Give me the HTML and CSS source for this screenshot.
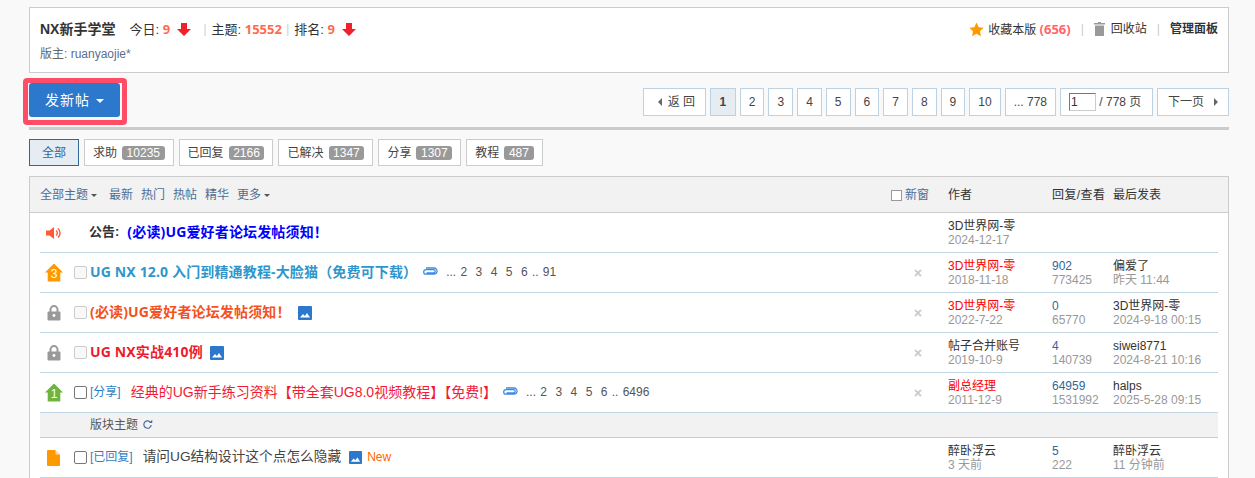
FILE: index.html
```html
<!DOCTYPE html>
<html lang="zh-CN">
<head>
<meta charset="utf-8">
<title>NX新手学堂</title>
<link rel="stylesheet" href="styles.css">
</head>
<body>
<svg class="defs" width="0" height="0" aria-hidden="true">
  <symbol id="i-pic" viewBox="0 0 14 14"><rect width="14" height="14" rx="1" fill="#2b78cd"/><path d="M2 11.500 5 8l1.800 2L9 7l3 4.500z" fill="#fff"/></symbol>
  <symbol id="i-clip" viewBox="0 0 16 9"><path d="M4.500 6h7a1.600 1.600 0 0 0 0-3.400H4a2.200 2.200 0 0 0 0 4.600h8a3 3 0 0 0 0-6.200H4" fill="none" stroke="#3f8ae0" stroke-width="1.300"/></symbol>
  <symbol id="i-lock" viewBox="0 0 14 16"><path d="M3.500 7V4.600a3.500 3.500 0 0 1 7 0V7" fill="none" stroke="#999" stroke-width="2"/><rect x="0.500" y="6.500" width="13" height="9" rx="1.200" fill="#999"/><circle cx="7" cy="10.500" r="1.400" fill="#fff"/></symbol>
  <symbol id="i-x" viewBox="0 0 8 8"><path d="M1 1l6 6M7 1 1 7" stroke="#ccc" stroke-width="1.800"/></symbol>
  <symbol id="i-down" viewBox="0 0 14 13"><path d="M4 0h6v6h4L7 13 0 6h4z" fill="#f0212b"/></symbol>
</svg>
<div class="page">
  <section class="forum-head">
    <div class="fh-left">
      <div class="fh-line">
        <strong class="fh-name">NX新手学堂</strong>
        <span>今日: <b class="num">9</b></span>
        <svg class="down"><use href="#i-down"/></svg>
        <span class="sep">|</span>
        <span>主题: <b class="num">15552</b></span>
        <span class="sep sep-tight">|</span>
        <span>排名: <b class="num">9</b></span>
        <svg class="down"><use href="#i-down"/></svg>
      </div>
      <div class="fh-mod">版主: <a class="link">ruanyaojie*</a></div>
    </div>
    <div class="fh-right">
      <svg class="star" viewBox="0 0 16 16"><path d="M8 .6l2.300 4.900 5.300.7-3.900 3.700 1 5.300L8 12.600l-4.700 2.600 1-5.300L.4 6.200l5.300-.7z" fill="#f90"/></svg>
      <span>收藏本版 <b class="num-fav">(656)</b></span>
      <span class="sep">|</span>
      <svg class="trash" viewBox="0 0 11 14"><path d="M4 0h3v1h4v1.400H0V1h4zM1 3.400h9V14H1z" fill="#999"/></svg>
      <span>回收站</span>
      <span class="sep">|</span>
      <strong class="admin">管理面板</strong>
    </div>
  </section>

  <div class="toolbar">
    <button class="post-btn">发新帖<i class="caret caret-w"></i></button>
    <nav class="pager">
      <a class="pg pg-back"><i class="tri-l"></i>返 回</a>
      <a class="pg cur">1</a><a class="pg">2</a><a class="pg">3</a><a class="pg">4</a><a class="pg">5</a><a class="pg">6</a><a class="pg">7</a><a class="pg">8</a><a class="pg">9</a><a class="pg">10</a><a class="pg">... 778</a>
      <span class="pg pg-jump"><input class="pg-input" value="1" aria-label="页码"> / 778 页</span>
      <a class="pg pg-next">下一页<i class="tri-r"></i></a>
    </nav>
  </div>

  <div class="tabs">
    <a class="tab active">全部</a>
    <a class="tab">求助 <span class="badge">10235</span></a>
    <a class="tab">已回复 <span class="badge">2166</span></a>
    <a class="tab">已解决 <span class="badge">1347</span></a>
    <a class="tab">分享 <span class="badge">1307</span></a>
    <a class="tab">教程 <span class="badge">487</span></a>
  </div>

  <section class="list">
    <header class="list-head">
      <div class="lh-filters">
        <a>全部主题<i class="caret caret-b"></i></a><a class="f1">最新</a><a>热门</a><a>热帖</a><a>精华</a><a>更多<i class="caret caret-b"></i></a>
      </div>
      <label class="lh-new"><i class="mini-box"></i>新窗</label>
      <span class="c-author">作者</span>
      <span class="c-count wide">回复/查看</span>
      <span class="c-last">最后发表</span>
    </header>
    <div class="rows">
      <div class="row">
        <span class="c-icon"><svg class="horn" viewBox="0 0 16 14"><path d="M0 4.500h3.500L8 1v12L3.500 9.500H0z" fill="#ff5a36"/><path d="M10 4.500a3 3 0 0 1 0 5M12 2.500a6 6 0 0 1 0 9" fill="none" stroke="#ff5a36" stroke-width="1.400"/></svg></span>
        <span class="c-check"></span>
        <div class="c-title"><b class="notice-label">公告:</b> <a class="t t-notice">(必读)UG爱好者论坛发帖须知！</a></div>
        <span class="c-x"></span>
        <div class="c-author cell"><a>3D世界网-零</a><em>2024-12-17</em></div>
        <div class="c-count cell"></div>
        <div class="c-last cell"></div>
      </div>
      <div class="row">
        <span class="c-icon"><span class="up up-o">3</span></span>
        <span class="c-check"><i class="box soft"></i></span>
        <div class="c-title"><a class="t t-blue">UG NX 12.0 入门到精通教程-大脸猫（免费可下载）</a><svg class="clip"><use href="#i-clip"/></svg><span class="tpages">... 2 &nbsp;3 &nbsp;4 &nbsp;5 &nbsp;6 .. 91</span></div>
        <span class="c-x"><svg class="x"><use href="#i-x"/></svg></span>
        <div class="c-author cell"><a class="red">3D世界网-零</a><em>2018-11-18</em></div>
        <div class="c-count cell"><a class="reply">902</a><em>773425</em></div>
        <div class="c-last cell"><a>偏爱了</a><em>昨天 11:44</em></div>
      </div>
      <div class="row">
        <span class="c-icon"><svg class="lock"><use href="#i-lock"/></svg></span>
        <span class="c-check"><i class="box soft"></i></span>
        <div class="c-title"><a class="t t-orange">(必读)UG爱好者论坛发帖须知！</a><svg class="pic"><use href="#i-pic"/></svg></div>
        <span class="c-x"><svg class="x"><use href="#i-x"/></svg></span>
        <div class="c-author cell"><a class="red">3D世界网-零</a><em>2022-7-22</em></div>
        <div class="c-count cell"><a class="reply">0</a><em>65770</em></div>
        <div class="c-last cell"><a>3D世界网-零</a><em>2024-9-18 00:15</em></div>
      </div>
      <div class="row">
        <span class="c-icon"><svg class="lock"><use href="#i-lock"/></svg></span>
        <span class="c-check"><i class="box soft"></i></span>
        <div class="c-title"><a class="t t-red">UG NX实战410例</a><svg class="pic"><use href="#i-pic"/></svg></div>
        <span class="c-x"><svg class="x"><use href="#i-x"/></svg></span>
        <div class="c-author cell"><a>帖子合并账号</a><em>2019-10-9</em></div>
        <div class="c-count cell"><a class="reply">4</a><em>140739</em></div>
        <div class="c-last cell"><a>siwei8771</a><em>2024-8-21 10:16</em></div>
      </div>
      <div class="row">
        <span class="c-icon"><span class="up up-g">1</span></span>
        <span class="c-check"><i class="box"></i></span>
        <div class="c-title"><a class="type">[分享]</a><a class="t-plain red">经典的UG新手练习资料【带全套UG8.0视频教程】【免费!】</a><svg class="clip"><use href="#i-clip"/></svg><span class="tpages">... 2 &nbsp;3 &nbsp;4 &nbsp;5 &nbsp;6 .. 6496</span></div>
        <span class="c-x"><svg class="x"><use href="#i-x"/></svg></span>
        <div class="c-author cell"><a class="red">副总经理</a><em>2011-12-9</em></div>
        <div class="c-count cell"><a class="reply">64959</a><em>1531992</em></div>
        <div class="c-last cell"><a>halps</a><em>2025-5-28 09:15</em></div>
      </div>
      <div class="row-sub">版块主题 <svg class="refresh" viewBox="0 0 12 12"><path d="M10 6.500A4 4 0 1 1 8.600 3" fill="none" stroke="#4a6a94" stroke-width="1.300"/><path d="M7.500 4.400h3.700V.7z" fill="#4a6a94"/></svg></div>
      <div class="row">
        <span class="c-icon"><svg class="file" viewBox="0 0 13 16"><path d="M1 0h7l5 5v10a1 1 0 0 1-1 1H1a1 1 0 0 1-1-1V1a1 1 0 0 1 1-1z" fill="#f90"/><path d="M8.500 0 13 4.500H8.500z" fill="#ffd9a0"/></svg></span>
        <span class="c-check"><i class="box"></i></span>
        <div class="c-title"><a class="type">[已回复]</a><a class="t-plain t-reply">请问UG结构设计这个点怎么隐藏</a><svg class="pic pic-new"><use href="#i-pic"/></svg><span class="new">New</span></div>
        <span class="c-x"></span>
        <div class="c-author cell"><a>醉卧浮云</a><em>3 天前</em></div>
        <div class="c-count cell"><a class="reply">5</a><em>222</em></div>
        <div class="c-last cell"><a>醉卧浮云</a><em>11 分钟前</em></div>
      </div>
    </div>
  </section>
</div>
</body>
</html>
```
FILE: styles.css
```css
* { box-sizing: border-box; }
html, body { height: 478px; overflow: hidden; }
body {
  margin: 0;
  background: #f9f9f9;
  color: #333;
  font: 12px/16px "Liberation Sans", "Noto Sans CJK SC", sans-serif;
}
.defs { position: absolute; }
a { color: inherit; text-decoration: none; }
em { font-style: normal; }
.page { width: 1200px; margin: 7px 0 0 29px; }

/* forum header */
.forum-head {
  height: 66px;
  background: #fff;
  border: 1px solid #ccc;
  padding: 11px 10px 0;
  display: flex;
  justify-content: space-between;
}
.fh-line { display: flex; align-items: center; height: 20px; font-size: 13px; }
.fh-name { font-size: 14px; margin-right: 14px; color: #333; }
.num { color: #ff6b4d; font: 700 13px/16px "Noto Sans", sans-serif; }
.down { width: 14px; height: 13px; margin: 0 0 0 7px; }
.sep { color: #c9d6e3; margin: 0 5px 0 12px; }
.sep-tight { margin: 0 5px 0 4px; }
.fh-mod { margin-top: 7px; color: #666; }
.link { color: #5a6f8f; }
.fh-right { display: flex; align-items: center; height: 18px; margin-top: 1px; }
.star { width: 15px; height: 15px; margin-right: 4px; }
.num-fav { color: #f66; font: 700 13px/16px "Noto Sans", sans-serif; }
.trash { width: 11px; height: 14px; margin: 0 6px 0 0; }
.admin { color: #333; font-weight: 600; }
.fh-right .sep { margin: 0 10px; color: #ccc; }

/* toolbar */
.toolbar {
  display: flex;
  justify-content: space-between;
  height: 57px;
  padding-top: 10px;
  border-bottom: 3px solid #ccc;
  margin-bottom: 9px;
}
.post-btn {
  position: relative;
  width: 91px;
  height: 34px;
  border: 0;
  border-radius: 3px;
  background: #2b78cd;
  color: #fff;
  font: 14px/34px "Liberation Sans", "Noto Sans CJK SC", sans-serif;
  letter-spacing: 1px;
  padding: 0;
}
.post-btn::after {
  content: "";
  position: absolute;
  left: -6px; top: -5px; right: -7px; bottom: -8px;
  border: 5px solid #ff4d68;
  border-radius: 4px;
}
.caret { display: inline-block; width: 0; height: 0; border: 4px solid transparent; border-bottom: 0; vertical-align: middle; margin-left: 4px; }
.caret-w { border-top-color: #fff; margin-left: 6px; }
.caret-b { border-width: 3px; border-bottom: 0; border-top-color: #555; margin-left: 3px; }

.pager { display: flex; gap: 4px; height: 28px; margin-top: 5px; }
.pg {
  display: flex; align-items: center; justify-content: center;
  height: 28px;
  padding: 0 8px;
  background: #fff;
  border: 1px solid #bcd2e2;
  color: #444;
}
.pg.cur { background: #e5ecf2; font-weight: 700; width: 26px; padding: 0; }
.pg-back { width: 63px; padding: 0 0 0 14px; justify-content: flex-start; }
.pg-jump { width: 93px; padding: 0 0 0 8px; justify-content: flex-start; white-space: pre; }
.pg-input {
  width: 27px; height: 18px; margin: 0; padding: 0 1px;
  border: 1px solid #ccc; border-top-color: #777; border-left-color: #777;
  font: 12px "Liberation Sans", sans-serif; color: #333; background: #fff;
}
.pg-next { width: 72px; padding: 0 0 0 10px; justify-content: flex-start; }
.tri-l, .tri-r { width: 0; height: 0; border: 4px solid transparent; }
.tri-l { border-right-color: #666; border-left: 0; margin-right: 6px; }
.tri-r { border-left-color: #666; border-right: 0; margin-left: 10px; }

/* tabs */
.tabs { display: flex; gap: 5px; height: 27px; margin-bottom: 10px; }
.tab {
  display: flex; align-items: center; gap: 5px;
  padding: 1px 8px 0;
  background: #fff;
  border: 1px solid #ccc;
  color: #444;
}
.tab.active { width: 50px; justify-content: center; background: #e5ecf2; border-color: #336699; color: #369; }
.badge {
  padding: 0 4.600px;
  height: 14px; line-height: 14px;
  border-radius: 3px;
  background: #999;
  color: #fff;
}

/* list */
.list { background: #fff; border: 1px solid #ccc; }
.list-head {
  display: grid;
  grid-template-columns: 851px 57px 104px 61px 1fr;
  align-items: center;
  height: 36px;
  padding: 1px 10px 0;
  background: #f2f2f2;
  border-bottom: 1px solid #ccc;
}
.lh-filters { display: flex; gap: 8px; color: #4d6d94; }
.lh-filters .f1 { margin-left: 4px; }
.lh-new { display: flex; align-items: center; color: #4d6d94; gap: 3px; }
.mini-box { width: 11px; height: 11px; border: 1px solid #999; background: #fff; }
.wide { letter-spacing: .4px; white-space: nowrap; }

.rows { padding: 0 10px; }
.row {
  display: grid;
  grid-template-columns: 34px 16px 818px 40px 104px 61px 1fr;
  align-items: center;
  height: 40px;
  border-bottom: 1px solid #c2d5e3;
}
.c-icon { display: flex; justify-content: flex-start; padding-left: 5px; }
.c-check { display: flex; }
.box { width: 13px; height: 13px; border: 1px solid #777; border-radius: 2px; background: #fff; }
.box.soft { border-color: #ccc; background: #f8f8f8; }
.c-title { display: flex; align-items: center; white-space: nowrap; height: 20px; margin-bottom: 2px; }
.t { font: 700 14px/20px "Noto Sans", "Noto Sans CJK SC", sans-serif; letter-spacing: .15px; }
.notice-label { font-size: 13px; color: #333; margin: 0 8px 0 -1px; }
.t-notice { color: #00f; }
.t-blue { color: #2f96cc; }
.t-orange { color: #f4511e; }
.t-red { color: #ee1b2e; }
.t-plain { font-size: 14px; margin-left: 10px; color: #444; }
.t-plain.red { color: #f01c36; }
.t-reply { font-size: 13.700px; }
.type { color: #2f7fc4; }
.tpages { margin-left: 8px; color: #555; word-spacing: .9px; }
.clip { width: 16px; height: 9px; margin-left: 5px; }
.pic { width: 14px; height: 14px; margin: 2px 0 0 7px; }
.pic-new { margin-left: 8px; width: 13px; height: 13px; }
.new { color: #f60; margin-left: 5px; }
.c-x { padding-left: 6px; display: flex; }
.x { width: 8px; height: 8px; }
.cell { display: flex; flex-direction: column; line-height: 14px; color: #333; }
.cell em { color: #999; }
.red { color: #f00; }
.reply { color: #369; }
.lock { width: 14px; height: 16px; margin-left: 2px; }
.horn { width: 16px; height: 14px; margin-left: 1px; }
.file { width: 13px; height: 16px; margin-left: 2px; }
.up {
  display: block; width: 18px; height: 18px;
  color: #fff; font: 12px/21px "Liberation Sans", sans-serif; text-align: center;
  clip-path: polygon(50% 0, 100% 50%, 85% 50%, 85% 100%, 15% 100%, 15% 50%, 0 50%);
}
.up-o { background: #f90; }
.up-g { background: #6eb43f; }
.row-sub {
  height: 25px; line-height: 24px;
  padding-left: 50px;
  background: #f2f2f2;
  border-bottom: 1px solid #ccc;
  color: #555;
}
.refresh { width: 11px; height: 11px; vertical-align: -1px; margin-left: 1px; }
```
